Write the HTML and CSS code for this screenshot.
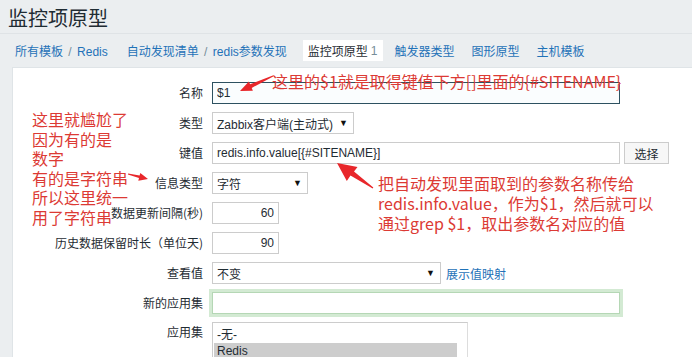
FILE: index.html
```html
<!DOCTYPE html>
<html>
<head>
    <meta charset="utf-8">
    <title>监控项原型</title>
<link rel="stylesheet" href="styles.css">
</head>
<body>

<header class="page-title">
  <h1>监控项原型</h1>
</header>

<nav class="crumbs">
  <span class="crumb"><a href="#">所有模板</a> <span class="sep">/</span> <a href="#">Redis</a></span>
  <span class="crumb"><a href="#">自动发现清单</a> <span class="sep">/</span> <a href="#">redis参数发现</a></span>
  <span class="tab active">监控项原型 <span class="count">1</span></span>
  <a class="tab" href="#">触发器类型</a>
  <a class="tab" href="#">图形原型</a>
  <a class="tab" href="#">主机模板</a>
</nav>

<main class="panel">
  <form class="item-form">
    <label>名称</label>
    <input class="field focused w-wide" type="text" value="$1">

    <label>类型</label>
    <div class="select w-type"><span>Zabbix客户端(主动式)</span><span class="caret">&#9660;</span></div>

    <label>键值</label>
    <div class="inline">
      <input class="field w-wide" type="text" value="redis.info.value[{#SITENAME}]">
      <button class="btn" type="button">选择</button>
    </div>

    <label>信息类型</label>
    <div class="select w-info"><span>字符</span><span class="caret">&#9660;</span></div>

    <label>数据更新间隔(秒)</label>
    <input class="field num" type="text" value="60">

    <label>历史数据保留时长（单位天)</label>
    <input class="field num" type="text" value="90">

    <label>查看值</label>
    <div class="inline">
      <div class="select w-view"><span>不变</span><span class="caret">&#9660;</span></div>
      <a class="link" href="#">展示值映射</a>
    </div>

    <label>新的应用集</label>
    <input class="field glow w-wide" type="text" value="">

    <label class="top">应用集</label>
    <ul class="listbox">
      <li>-无-</li>
      <li class="selected">Redis</li>
    </ul>
  </form>
</main>

<!-- annotations drawn over the screenshot -->
<div class="note note-name">这里的$1就是取得键值下方[]里面的{#SITENAME}</div>
<div class="note note-left">这里就尴尬了<br>因为有的是<br>数字<br>有的是字符串<br>所以这里统一<br>用了字符串</div>
<div class="note note-key">把自动发现里面取到的参数名称传给<br>redis.info.value，作为$1，然后就可以<br>通过grep $1，取出参数名对应的值</div>

<svg class="arrows" width="692" height="357" viewBox="0 0 692 357">
  <polygon points="240,91 252.9,90.7 251.7,87.9 273.2,76.5 272.8,75.5 250.1,84.3 248.9,81.6"/>
  <polygon points="148,179 138.3,180.7 139,178.1 127.9,174.4 128.1,173.6 139.6,175.5 140.3,172.9"/>
  <polygon points="337,163 357.5,167 354,171.5 373.3,187.5 372.7,188.5 350.5,175.6 346.8,181"/>
</svg>

</body>
</html>
```

FILE: styles.css
```css
body {
    margin: 0;
    background-color: #ebeef0;
    font-family: "Liberation Sans", "Noto Sans CJK SC", sans-serif;
    font-size: 12px;
    color: #1f2c33;
    height: 357px;
    overflow: hidden;
}

.page-title {
    height: 33px;
    box-sizing: border-box;
    padding: 4px 8px 0;
}

.page-title h1 {
    margin: 0;
    font-size: 20px;
    line-height: 28px;
    font-weight: normal;
    font-family: "Noto Sans CJK SC", sans-serif;
}

.crumbs {
    height: 34px;
    box-sizing: border-box;
    border-top: 1px solid #dfe3e6;
    display: flex;
    align-items: center;
    padding-left: 15px;
}

.crumbs a {
    color: #1f72b8;
    text-decoration: none;
}

.crumb {
    margin-right: 19px;
    white-space: nowrap;
}

.crumb + .crumb {
    margin-right: 16px;
}

.sep {
    color: #768d99;
    padding: 0 2px;
}

.tab {
    height: 21px;
    display: flex;
    align-items: center;
    padding: 0 5px;
    margin-right: 7px;
    white-space: nowrap;
}

.tab.active {
    background-color: #ffffff;
    color: #1f2c33;
}

.count {
    color: #768d99;
    margin-left: 3px;
}

.panel {
    margin-left: 12px;
    background-color: #ffffff;
    border-top: 1px solid #dfe4e7;
    border-left: 1px solid #dfe4e7;
    padding-top: 14px;
    height: 275px;
    overflow: hidden;
}

.item-form {
    display: grid;
    grid-template-columns: 190px auto;
    column-gap: 9px;
    row-gap: 8px;
    justify-items: start;
    align-items: center;
}

.item-form label {
    justify-self: end;
    white-space: nowrap;
    font-family: "Noto Sans CJK SC", sans-serif;
    line-height: 22px;
}

.item-form label.top {
    align-self: start;
    line-height: 16px;
    padding-top: 2px;
}

.field {
    height: 22px;
    box-sizing: border-box;
    border: 1px solid #cccccc;
    background-color: #ffffff;
    font-family: "Liberation Sans", "Noto Sans CJK SC", sans-serif;
    font-size: 12px;
    color: #1f2c33;
    padding: 0 4px;
    margin: 0;
    outline: none;
}

.field.focused {
    border-color: #2d5160;
    background-color: #fafdfe;
}

.field.glow {
    border-color: #b5d7b5;
    box-shadow: 0 0 0 3px #d3ead3;
}

.w-wide {
    width: 408px;
}

.num {
    width: 67px;
    text-align: right;
}

.inline {
    display: flex;
    align-items: center;
    gap: 4px;
}

.btn {
    height: 22px;
    width: 45px;
    border: 1px solid #cccccc;
    background-color: #f7f7f7;
    font-family: "Noto Sans CJK SC", sans-serif;
    font-size: 12px;
    color: #1f2c33;
    padding: 0;
}

.select {
    height: 22px;
    box-sizing: border-box;
    border: 1px solid #cccccc;
    background-color: #ffffff;
    display: flex;
    align-items: center;
    justify-content: space-between;
    padding: 0 5px 0 4px;
    font-family: "Liberation Sans", "Noto Sans CJK SC", sans-serif;
    white-space: nowrap;
}

.caret {
    font-size: 9px;
    color: #111111;
}

.w-type {
    width: 142px;
}

.w-info {
    width: 96px;
}

.w-view {
    width: 229px;
}

.link {
    color: #1f72b8;
    text-decoration: none;
    font-family: "Noto Sans CJK SC", sans-serif;
    margin-left: 1px;
}

.listbox {
    list-style: none;
    margin: 0;
    padding: 4px 0 0 1px;
    width: 256px;
    height: 60px;
    box-sizing: border-box;
    border: 1px solid #cccccc;
    border-right-color: #dddddd;
}

.listbox li {
    height: 16px;
    line-height: 16px;
    padding-left: 3px;
    margin-right: 10px;
}

.listbox li.selected {
    background-color: #cdcdcd;
}

.note {
    position: absolute;
    font-family: "Noto Sans CJK SC", sans-serif;
    font-size: 16px;
    color: #dc3a34;
    white-space: nowrap;
}

.note-name {
    left: 272px;
    top: 70px;
    line-height: 22px;
}

.note-left {
    left: 32px;
    top: 110px;
    line-height: 19.5px;
}

.note-key {
    left: 378px;
    top: 173px;
    line-height: 20px;
}

.arrows {
    position: absolute;
    left: 0;
    top: 0;
    pointer-events: none;
    fill: #e8272b;
}
```
